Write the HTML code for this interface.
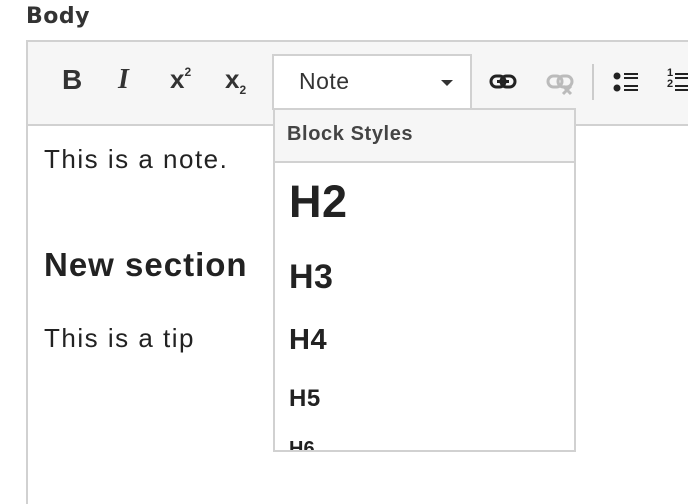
<!DOCTYPE html>
<html style="overflow:hidden;height:504px"><head><style>
body{margin:0;width:688px;height:504px;overflow:hidden;background:#fff;font-family:"Liberation Sans",Arial,sans-serif;position:relative;color:#222}
.a{position:absolute;white-space:nowrap}
</style></head><body>
<div class="a" style="left:26px;top:4px;font-family:'DejaVu Sans',sans-serif;font-weight:bold;font-size:22px;color:#333;letter-spacing:0.5px">Body</div>
<div class="a" style="left:26px;top:40px;width:662px;height:464px;border:2px solid #d1d1d1;border-right:none;border-bottom:none;box-sizing:border-box"></div>
<div class="a" style="left:28px;top:42px;width:660px;height:82px;background:#f6f6f6;border-bottom:2px solid #d1d1d1"></div>
<div class="a" style="left:62px;top:64px;font-size:28px;font-weight:bold;color:#333">B</div>
<div class="a" style="left:118px;top:64px;font-size:28px;font-weight:bold;font-style:italic;font-family:'Liberation Serif',serif;color:#333">I</div>
<div class="a" style="left:170px;top:64px;font-size:26px;font-weight:bold;color:#333">x<span style="font-size:12px;vertical-align:12px">2</span></div>
<div class="a" style="left:225px;top:64px;font-size:26px;font-weight:bold;color:#333">x<span style="font-size:12px;vertical-align:-6px">2</span></div>
<div class="a" style="left:272px;top:54px;width:200px;height:56px;background:#fff;border:2px solid #d1d1d1;box-sizing:border-box"></div>
<div class="a" style="left:299px;top:68px;font-size:23px;color:#333;letter-spacing:0.5px">Note</div>
<svg class="a" style="left:440px;top:79px" width="14" height="8"><path d="M1 1h12L7 7z" fill="#333"/></svg>
<svg class="a" style="left:488px;top:72px" width="30" height="20"><rect x="3" y="4" width="14" height="11" rx="5.5" fill="none" stroke="#222" stroke-width="3"/><rect x="13" y="4" width="14" height="11" rx="5.5" fill="none" stroke="#222" stroke-width="3"/><path d="M9 9.5h12" stroke="#222" stroke-width="3"/></svg>
<svg class="a" style="left:545px;top:72px" width="30" height="24"><rect x="3" y="4" width="14" height="11" rx="5.5" fill="none" stroke="#bbb" stroke-width="3"/><rect x="13" y="4" width="14" height="11" rx="5.5" fill="none" stroke="#bbb" stroke-width="3"/><path d="M18 14l8 8M26 14l-8 8" stroke="#bbb" stroke-width="3"/></svg>
<div class="a" style="left:592px;top:64px;width:2px;height:36px;background:#ccc"></div>
<svg class="a" style="left:612px;top:70px" width="30" height="26"><circle cx="5" cy="6" r="3.5" fill="#222"/><circle cx="5" cy="18" r="3.5" fill="#222"/><path d="M12 4h14M12 8h14M12 16h14M12 20h14" stroke="#222" stroke-width="2"/></svg>
<div class="a" style="left:667px;top:68px;font-size:11px;line-height:11px;color:#222;font-weight:bold">1<br>2</div>
<svg class="a" style="left:674px;top:70px" width="14" height="26"><path d="M1 4h14M1 8h14M1 16h14M1 20h14" stroke="#222" stroke-width="2"/></svg>
<div class="a" style="left:44px;top:144px;font-size:26px;letter-spacing:1.5px">This is a note.</div>
<div class="a" style="left:44px;top:246px;font-size:33px;font-weight:bold;letter-spacing:1px">New section</div>
<div class="a" style="left:44px;top:323px;font-size:26px;letter-spacing:1.5px">This is a tip</div>
<div class="a" style="left:273px;top:108px;width:303px;height:344px;background:#fff;border:2px solid #d1d1d1;box-sizing:border-box;overflow:hidden">
<div style="height:51px;background:#f6f6f6;border-bottom:2px solid #d1d1d1"></div>
<div class="a" style="left:12px;top:13px;font-size:20px;font-weight:bold;color:#444;letter-spacing:0.6px">Block Styles</div>
<div class="a" style="left:14px;top:66px;font-size:45px;font-weight:bold;letter-spacing:0.5px">H2</div>
<div class="a" style="left:14px;top:148px;font-size:34px;font-weight:bold;letter-spacing:0.5px">H3</div>
<div class="a" style="left:14px;top:214px;font-size:29px;font-weight:bold;letter-spacing:0.5px">H4</div>
<div class="a" style="left:14px;top:275px;font-size:24px;font-weight:bold;letter-spacing:0.5px">H5</div>
<div class="a" style="left:14px;top:328px;font-size:20px;font-weight:bold">H6</div>
</div>
</body></html>
